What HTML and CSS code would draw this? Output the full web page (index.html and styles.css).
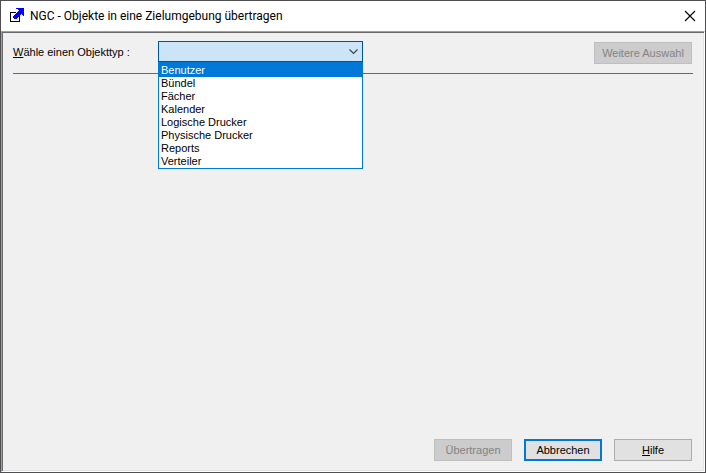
FILE: index.html
```html
<!DOCTYPE html>
<html lang="de">
<head>
  <meta charset="UTF-8">
  <meta name="viewport" content="width=device-width, initial-scale=1.0">
  <title>NGC - Objekte in eine Zielumgebung übertragen</title>
  <link rel="stylesheet" href="styles.css">
</head>
<body>
  <div class="window">
    <header class="titlebar">
      <svg class="app-icon" width="16" height="16" viewBox="0 0 16 16" shape-rendering="crispEdges" aria-hidden="true">
        <path d="M7 4.500H1.500V13.500H10.500V8" fill="none" stroke="#000"/>
        <path d="M7 0H15V8H14V7H13V6H12V7H11V8H10V9H9V10H8V11H5V10H4V8H5V7H6V6H7V5H8V4H9V3H10V2H9V1H7Z" fill="#00f"/>
      </svg>
      <h1>NGC - Objekte in eine Zielumgebung übertragen</h1>
      <button class="close" type="button" aria-label="Schließen">
        <svg width="12" height="12" viewBox="0 0 12 12"><path d="M1 1L11 11M11 1L1 11" stroke="#000" stroke-width="1.1"/></svg>
      </button>
    </header>
    <main class="client">
      <div class="filter">
        <label for="objectType"><u>W</u>ähle einen Objekttyp :</label>
        <div class="combo">
          <select id="objectType">
            <option value=""></option>
            <option>Benutzer</option>
            <option>Bündel</option>
            <option>Fächer</option>
            <option>Kalender</option>
            <option>Logische Drucker</option>
            <option>Physische Drucker</option>
            <option>Reports</option>
            <option>Verteiler</option>
          </select>
          <svg class="arrow" width="9" height="6" viewBox="0 0 9 6" aria-hidden="true"><path d="M.5 .5L4.500 4.500L8.500 .5" fill="none" stroke="#444" stroke-width="1.200"/></svg>
          <ul class="list" role="listbox" aria-label="Objekttyp">
            <li class="selected" role="option" aria-selected="true">Benutzer</li>
            <li role="option">Bündel</li>
            <li role="option">Fächer</li>
            <li role="option">Kalender</li>
            <li role="option">Logische Drucker</li>
            <li role="option">Physische Drucker</li>
            <li role="option">Reports</li>
            <li role="option">Verteiler</li>
          </ul>
        </div>
        <button class="btn wide" type="button" disabled>Weitere Auswahl</button>
      </div>
      <footer class="actions">
        <button class="btn" type="button" disabled>Übertragen</button>
        <button class="btn default" type="button">Abbrechen</button>
        <button class="btn" type="button"><u>H</u>ilfe</button>
      </footer>
    </main>
  </div>
</body>
</html>
```

FILE: styles.css
```css
* { margin: 0; padding: 0; box-sizing: border-box; }

body {
  background: #f0f0f0;
  color: #000;
  font-family: "Liberation Sans", Arial, sans-serif;
  font-size: 11px;
  line-height: 13px;
}

/* Window frame */
.window {
  display: flex;
  flex-direction: column;
  min-height: 100vh;
  border: 1px solid #4f4f53;
  background: #fff;
}

.titlebar {
  display: flex;
  align-items: center;
  height: 30px;
  padding: 0 9px 0 8px;
}
.titlebar h1 {
  flex: 1;
  margin-left: 5px;
  font-family: Roboto, sans-serif;
  font-size: 12px;
  font-weight: normal;
  line-height: 16px;
}
.close {
  display: flex;
  border: none;
  background: none;
}

/* Sunken client area */
.client {
  flex: 1;
  display: flex;
  flex-direction: column;
  justify-content: space-between;
  padding: 9px 11px 10px;
  border: 1px solid;
  border-color: #a0a0a0 #fff #fff #a0a0a0;
  background: #f0f0f0;
  box-shadow: inset 1px 1px #696969, inset -1px -1px #e3e3e3;
}

.filter {
  display: flex;
  align-items: flex-start;
  padding: 0 1px 9px 0;
  border-bottom: 1px solid #696969;
}
.filter label {
  width: 145px;
  padding-top: 5px;
}

/* Combo box with its open list */
.combo {
  position: relative;
  width: 205px;
}
.combo select {
  display: block;
  width: 100%;
  height: 21px;
  border: 1px solid #005499;
  border-radius: 0;
  background: #cce4f7;
  font: inherit;
  appearance: none;
  outline: none;
}
.arrow {
  position: absolute;
  top: 8px;
  right: 5px;
  pointer-events: none;
}
.list {
  position: absolute;
  top: 100%;
  left: 0;
  width: 100%;
  padding-top: 2px;
  border: 1px solid #0078d7;
  border-top: none;
  background: #fff;
  list-style: none;
}
.list li { padding: 0 2px; }
.list .selected {
  background: #0078d7;
  box-shadow: 0 -2px #0078d7;
  color: #fff;
}

/* Buttons */
.btn {
  width: 78px;
  height: 22px;
  border: 1px solid #adadad;
  background: #e1e1e1;
  color: #000;
  font: inherit;
}
.btn.wide {
  width: 98px;
  margin: 1px 0 0 auto;
}
.btn.default { border: 2px solid #0078d7; }
.btn:disabled {
  border-color: #bfbfbf;
  background: #ccc;
  color: #838383;
}

.actions {
  display: flex;
  justify-content: flex-end;
  gap: 12px;
  padding-right: 1px;
}
```
